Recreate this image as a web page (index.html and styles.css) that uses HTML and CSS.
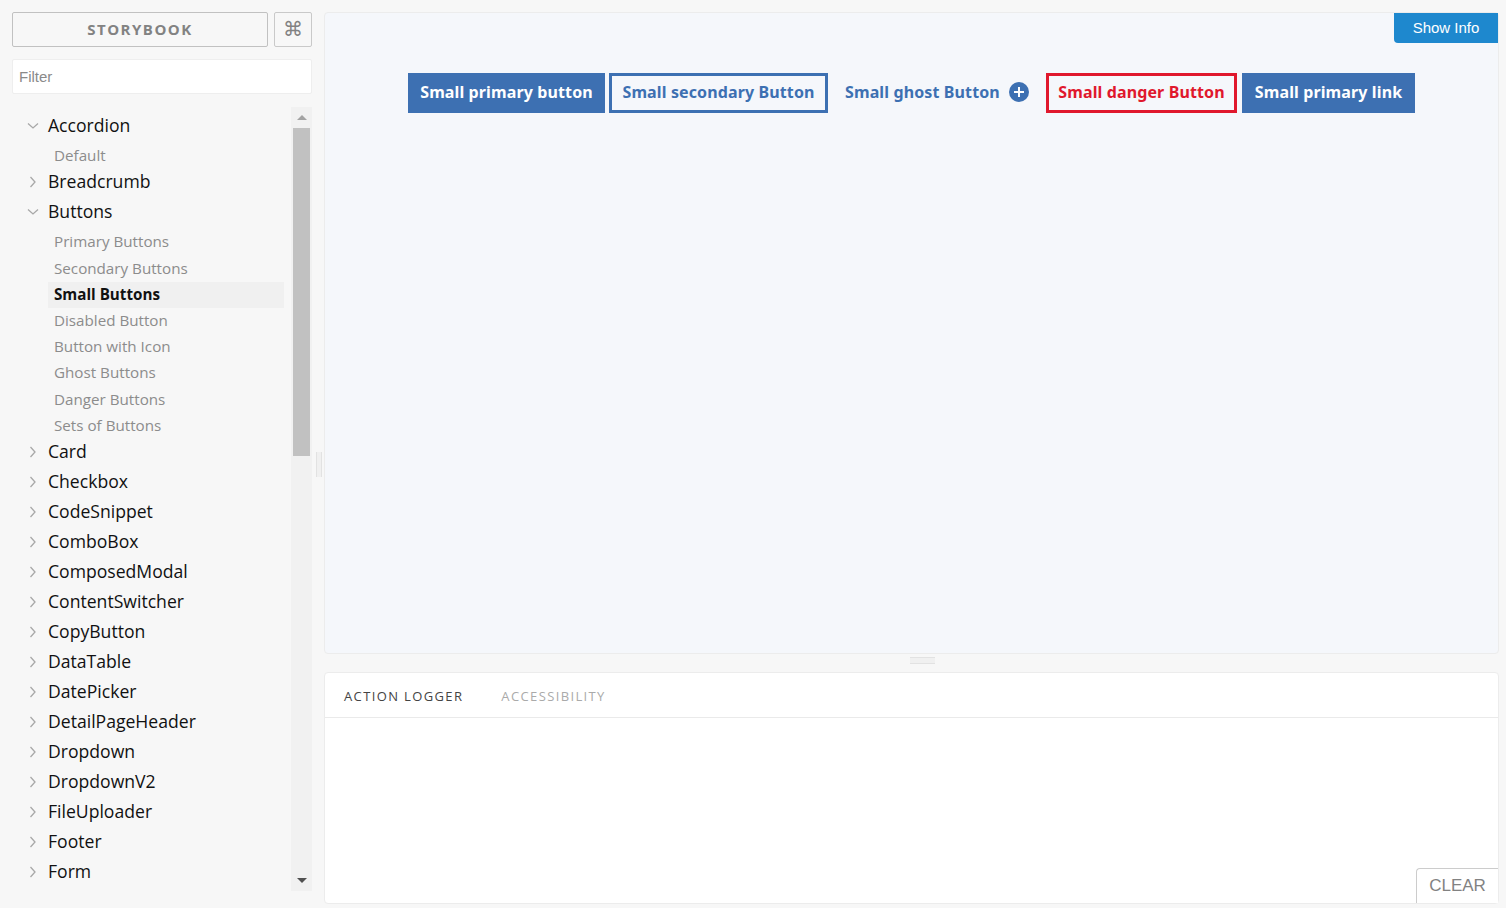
FILE: index.html
```html
<!DOCTYPE html>
<html lang="en">
<head>
<meta charset="utf-8">
<title>Storybook</title>
<link rel="stylesheet" href="styles.css">
</head>
<body>
<div class="app">
  <aside class="sidebar">
    <div class="head">
      <div class="brand">STORYBOOK</div>
      <div class="cmd">⌘</div>
    </div>
    <div class="filter">Filter</div>
    <div class="tree-wrap">
      <nav class="tree">
        <div class="node"><svg class="chev" viewBox="0 0 12 12"><path d="M1 3.500 6 8l5-4.500"/></svg>Accordion</div>
        <div class="subs">
          <div class="sub">Default</div>
        </div>
        <div class="node"><svg class="chev" viewBox="0 0 12 12"><path d="M3.500 1 8 6l-4.500 5"/></svg>Breadcrumb</div>
        <div class="node"><svg class="chev" viewBox="0 0 12 12"><path d="M1 3.500 6 8l5-4.500"/></svg>Buttons</div>
        <div class="subs">
          <div class="sub">Primary Buttons</div>
          <div class="sub">Secondary Buttons</div>
          <div class="sub active">Small Buttons</div>
          <div class="sub">Disabled Button</div>
          <div class="sub">Button with Icon</div>
          <div class="sub">Ghost Buttons</div>
          <div class="sub">Danger Buttons</div>
          <div class="sub">Sets of Buttons</div>
        </div>
        <div class="node"><svg class="chev" viewBox="0 0 12 12"><path d="M3.500 1 8 6l-4.500 5"/></svg>Card</div>
        <div class="node"><svg class="chev" viewBox="0 0 12 12"><path d="M3.500 1 8 6l-4.500 5"/></svg>Checkbox</div>
        <div class="node"><svg class="chev" viewBox="0 0 12 12"><path d="M3.500 1 8 6l-4.500 5"/></svg>CodeSnippet</div>
        <div class="node"><svg class="chev" viewBox="0 0 12 12"><path d="M3.500 1 8 6l-4.500 5"/></svg>ComboBox</div>
        <div class="node"><svg class="chev" viewBox="0 0 12 12"><path d="M3.500 1 8 6l-4.500 5"/></svg>ComposedModal</div>
        <div class="node"><svg class="chev" viewBox="0 0 12 12"><path d="M3.500 1 8 6l-4.500 5"/></svg>ContentSwitcher</div>
        <div class="node"><svg class="chev" viewBox="0 0 12 12"><path d="M3.500 1 8 6l-4.500 5"/></svg>CopyButton</div>
        <div class="node"><svg class="chev" viewBox="0 0 12 12"><path d="M3.500 1 8 6l-4.500 5"/></svg>DataTable</div>
        <div class="node"><svg class="chev" viewBox="0 0 12 12"><path d="M3.500 1 8 6l-4.500 5"/></svg>DatePicker</div>
        <div class="node"><svg class="chev" viewBox="0 0 12 12"><path d="M3.500 1 8 6l-4.500 5"/></svg>DetailPageHeader</div>
        <div class="node"><svg class="chev" viewBox="0 0 12 12"><path d="M3.500 1 8 6l-4.500 5"/></svg>Dropdown</div>
        <div class="node"><svg class="chev" viewBox="0 0 12 12"><path d="M3.500 1 8 6l-4.500 5"/></svg>DropdownV2</div>
        <div class="node"><svg class="chev" viewBox="0 0 12 12"><path d="M3.500 1 8 6l-4.500 5"/></svg>FileUploader</div>
        <div class="node"><svg class="chev" viewBox="0 0 12 12"><path d="M3.500 1 8 6l-4.500 5"/></svg>Footer</div>
        <div class="node"><svg class="chev" viewBox="0 0 12 12"><path d="M3.500 1 8 6l-4.500 5"/></svg>Form</div>
      </nav>
      <div class="scrollbar">
        <div class="arrow up"></div>
        <div class="thumb"></div>
        <div class="arrow down"></div>
      </div>
    </div>
  </aside>
  <div class="sash-v"></div>
  <main class="main">
    <section class="preview">
      <div class="show-info">Show Info</div>
      <div class="btn-row">
        <div class="btn primary">Small primary button</div>
        <div class="btn secondary">Small secondary Button</div>
        <div class="btn ghost">Small ghost Button<svg class="plus" viewBox="0 0 20 20"><circle cx="10" cy="10" r="10"/><path d="M10 5v10M5 10h10"/></svg></div>
        <div class="btn danger">Small danger Button</div>
        <div class="btn primary link">Small primary link</div>
      </div>
    </section>
    <div class="sash-h"></div>
    <section class="addons">
      <div class="tabs">
        <span class="tab on">ACTION LOGGER</span>
        <span class="tab">ACCESSIBILITY</span>
      </div>
      <div class="clear">CLEAR</div>
    </section>
  </main>
</div>
</body>
</html>
```
FILE: styles.css
```css
* { box-sizing: border-box; }
html, body { margin: 0; height: 100%; overflow: hidden; }
body { background: #f7f7f7; font-family: "Open Sans", sans-serif; }

.app {
  display: grid;
  grid-template-columns: 300px 12px 1175px;
  height: 908px;
  padding: 12px 7px 4px 12px;
}

.sidebar { display: flex; flex-direction: column; min-width: 0; }
.head { display: flex; gap: 6px; height: 35px; }
.brand {
  flex: 1;
  display: flex; align-items: center; justify-content: center;
  padding-bottom: 2px;
  border: 1px solid #c1c1c1; border-radius: 2px;
  color: #828282; font-size: 15px; font-weight: 700; letter-spacing: 1.500px;
}
.cmd {
  width: 38px;
  display: flex; align-items: center; justify-content: center;
  padding-bottom: 2px;
  border: 1px solid #c9c9c9; border-radius: 2px;
  color: #828282; font-size: 20px; font-family: "DejaVu Sans", sans-serif;
}
.filter {
  margin-top: 12px; height: 35px; padding-left: 6px;
  display: flex; align-items: center;
  background: #fff; border: 1px solid #eee; border-radius: 2px;
  color: #8a8a8a; font: 15px "Liberation Sans", sans-serif;
}
.tree-wrap { display: flex; margin-top: 13px; height: 784px; }
.tree { flex: 1; padding: 5px 7px 0 0; overflow: hidden; }
.node {
  position: relative;
  height: 26px; margin-bottom: 4px; padding-left: 36px;
  display: flex; align-items: center;
  color: #111; font-size: 17.600px; line-height: 26px; white-space: nowrap;
}
.chev {
  position: absolute; left: 15px; top: 8px;
  width: 12px; height: 12px;
  fill: none; stroke: #a8a8a8; stroke-width: 1.300;
}
.subs { padding: 1.100px 0 0 36px; margin-bottom: -1px; }
.sub {
  height: 26.200px; padding: 0 0 2px 6px;
  display: flex; align-items: center;
  color: #8c8c8c; font-size: 15.200px; white-space: nowrap;
}
.sub.active { background: #f0f0f0; color: #111; font-weight: 700; }

.scrollbar {
  width: 21px; flex: none;
  display: flex; flex-direction: column; align-items: center;
  background: #f1f1f1;
}
.arrow { width: 0; height: 0; border-left: 5px solid transparent; border-right: 5px solid transparent; flex: none; }
.arrow.up { border-bottom: 5px solid #a3a3a3; margin: 8px 0; }
.arrow.down { border-top: 5px solid #505050; margin-top: 422px; }
.thumb { width: 17px; height: 328px; background: #c1c1c1; flex: none; }

.sash-v { position: relative; }
.sash-v::after {
  content: ""; position: absolute; left: 4px; top: 440px;
  width: 4px; height: 25px;
  border: 1px solid #e2e2e2; border-width: 0 1px; background: #f0f0f0;
}

.main { display: flex; flex-direction: column; min-width: 0; }
.preview {
  position: relative;
  height: 642px;
  background: #f5f7fb;
  border: 1px solid #ececec; border-radius: 4px;
}
.show-info {
  position: absolute; top: 0; right: 0;
  width: 104px; height: 30px; padding-bottom: 2px;
  display: flex; align-items: center; justify-content: center;
  background: #1e88ce; color: #fff;
  border-radius: 0 0 0 4px;
  font: 15px "Liberation Sans", sans-serif;
}
.btn-row {
  display: flex; justify-content: center;
  padding-top: 60px;
}
.btn {
  height: 40px; padding: 0 12px 3px;
  display: flex; align-items: center;
  font-family: "Noto Sans", sans-serif;
  font-size: 16px; font-weight: 700; letter-spacing: 0.120px; white-space: nowrap;
}
.btn.primary { width: 197px; justify-content: center; background: #3d70b2; color: #fff; }
.btn.link { width: 173px; }
.btn.secondary { width: 219px; justify-content: center; margin: 0 5px 0 4px; padding: 0 0 3px; border: 3px solid #3d70b2; color: #3d70b2; }
.btn.ghost { width: 208px; justify-content: space-between; color: #3d70b2; margin-right: 5px; }
.btn.danger { width: 191px; justify-content: center; margin-right: 5px; padding: 0 0 3px; border: 3px solid #e0182d; color: #e0182d; }
.plus { width: 20px; height: 20px; margin-top: 1px; fill: #3d70b2; stroke: #fff; stroke-width: 2; }
.plus circle { stroke: none; }

.sash-h { position: relative; height: 18px; }
.sash-h::after {
  content: ""; position: absolute; left: 586px; top: 3px;
  width: 25px; height: 5px;
  border: 1px solid #e2e2e2; border-width: 1px 0; background: #f0f0f0;
}

.addons {
  position: relative;
  height: 232px;
  background: #fff;
  border: 1px solid #ececec; border-radius: 4px;
}
.tabs {
  height: 45px; padding: 1px 0 0 19px;
  display: flex; align-items: center; gap: 38px;
  border-bottom: 1px solid #eaeaea;
}
.tab { font-size: 13px; letter-spacing: 1.370px; color: #aaa; }
.tab.on { color: #444; }
.clear {
  position: absolute; right: 0; bottom: 0;
  width: 82px; height: 35px;
  display: flex; align-items: center; justify-content: center;
  background: #fff;
  border: 1px solid #ccc; border-width: 1px 0 0 1px; border-radius: 4px 0 0 0;
  color: #828282; font: 17px "Liberation Sans", sans-serif;
}
```
